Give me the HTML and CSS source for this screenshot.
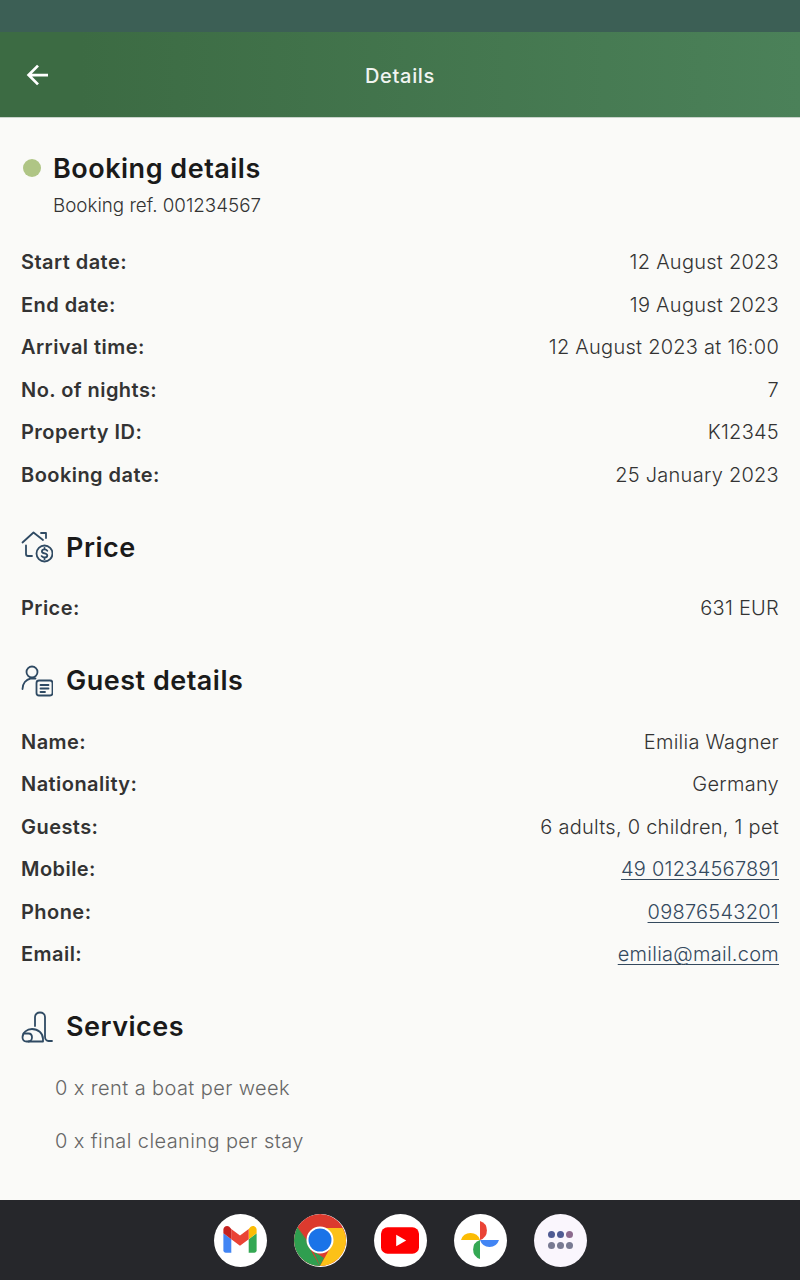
FILE: index.html
```html
<!DOCTYPE html>
<html lang="en">
<head>
    <meta charset="UTF-8">
    <meta name="viewport" content="width=device-width, initial-scale=1.0">
    <title>Details</title>
    <link rel="stylesheet" href="styles.css">
</head>
<body>
    <div class="status-bar"></div>
    <header class="toolbar">
        <svg class="back-icon" viewBox="0 0 24 24" width="30" height="30"><path d="M20 12H5M12 4.5L4.5 12l7.5 7.5" fill="none" stroke="#fff" stroke-width="2.2"/></svg>
        <div class="toolbar-title">Details</div>
    </header>

    <main class="content">
        <section class="booking">
            <div class="section-head booking-head">
                <span class="status-dot"></span>
                <h2>Booking details</h2>
            </div>
            <div class="booking-ref">Booking ref. 001234567</div>
            <div class="rows">
                <div class="row"><span class="label">Start date:</span><span class="value">12 August 2023</span></div>
                <div class="row"><span class="label">End date:</span><span class="value">19 August 2023</span></div>
                <div class="row"><span class="label">Arrival time:</span><span class="value">12 August 2023 at 16:00</span></div>
                <div class="row"><span class="label">No. of nights:</span><span class="value">7</span></div>
                <div class="row"><span class="label">Property ID:</span><span class="value">K12345</span></div>
                <div class="row"><span class="label">Booking date:</span><span class="value">25 January 2023</span></div>
            </div>
        </section>

        <section class="price">
            <div class="section-head">
                <svg class="section-icon" viewBox="0 0 32 32" width="32" height="32" fill="none" stroke="#2f4a63" stroke-width="1.8" stroke-linecap="round" stroke-linejoin="round">
                    <path d="M1.500 11.500L12.500 1.500l9.500 7.500M20 2h5v5M5 14.500V23c0 1.200.6 2 2 2h4"/>
                    <circle cx="23.500" cy="22.500" r="8"/>
                    <path d="M26.300 19.800c-.6-.9-1.600-1.400-2.800-1.400-1.500 0-2.600.8-2.600 2 0 2.700 5.400 1.400 5.400 4.100 0 1.200-1.200 2-2.800 2-1.200 0-2.300-.5-2.900-1.400M23.500 16.800v1.600M23.500 26.500v1.700"/>
                </svg>
                <h2>Price</h2>
            </div>
            <div class="rows">
                <div class="row"><span class="label">Price:</span><span class="value">631 EUR</span></div>
            </div>
        </section>

        <section class="guest">
            <div class="section-head">
                <svg class="section-icon" viewBox="0 0 32 32" width="32" height="32" fill="none" stroke="#2f4a63" stroke-width="1.8" stroke-linecap="round" stroke-linejoin="round">
                    <circle cx="11" cy="7" r="5.500"/>
                    <path d="M1.500 24c0-5.500 3.500-9.500 8-10.500h5"/>
                    <rect x="15.500" y="15.500" width="16" height="15" rx="2.500"/>
                    <path d="M19.500 20h8M19.500 23.500h8M19.500 27h4.500"/>
                </svg>
                <h2>Guest details</h2>
            </div>
            <div class="rows">
                <div class="row"><span class="label">Name:</span><span class="value">Emilia Wagner</span></div>
                <div class="row"><span class="label">Nationality:</span><span class="value">Germany</span></div>
                <div class="row"><span class="label">Guests:</span><span class="value">6 adults, 0 children, 1 pet</span></div>
                <div class="row"><span class="label">Mobile:</span><a class="value link" href="#">49 01234567891</a></div>
                <div class="row"><span class="label">Phone:</span><a class="value link" href="#">09876543201</a></div>
                <div class="row"><span class="label">Email:</span><a class="value link" href="#">emilia@mail.com</a></div>
            </div>
        </section>

        <section class="services">
            <div class="section-head">
                <svg class="section-icon" viewBox="0 0 32 32" width="32" height="32" fill="none" stroke="#2f4a63" stroke-width="1.8" stroke-linecap="round" stroke-linejoin="round">
                    <path d="M14 15V6c0-2.800 2.200-4.500 5-4.500s5 1.700 5 4.500v19.500c0 2.500 1.500 4.500 3.500 4.500H31"/>
                    <path d="M5.500 30.500c-2.500 0-4-1.700-4-4.300 0-4.700 4.500-8.200 9.500-8.200 6 0 11 4 11 10v2.500z"/>
                    <path d="M2.500 22.500h5c2 0 3.500 1.500 3.500 3.800 0 2.300-1.500 4.200-3.500 4.200"/>
                </svg>
                <h2>Services</h2>
            </div>
            <ul class="service-list">
                <li>0 x rent a boat per week</li>
                <li>0 x final cleaning per stay</li>
            </ul>
        </section>
    </main>

    <nav class="dock">
        <div class="app">
            <svg viewBox="0 0 48 48" width="38" height="38">
                <path fill="#4285f4" d="M6 40h7V23l-10-7.500V37c0 1.700 1.300 3 3 3z"/>
                <path fill="#34a853" d="M35 40h7c1.700 0 3-1.300 3-3V15.500L35 23z"/>
                <path fill="#fbbc04" d="M35 10v13l10-7.500V11c0-3.900-4.400-6.100-7.500-3.800z"/>
                <path fill="#ea4335" d="M13 23V10l11 8.300L35 10v13l-11 8.300z"/>
                <path fill="#c5221f" d="M3 11v4.500L13 23V10l-2.500-2.800C7.400 4.900 3 7.100 3 11z"/>
            </svg>
        </div>
        <div class="app chrome">
            <svg viewBox="0 0 52 52" width="52" height="52">
                <circle cx="26" cy="26" r="26" fill="#dc3a2e"/>
                <path fill="#2f9e4f" d="M26 52C11.600 52 0 40.400 0 26c0-4.700 1.200-9.100 3.400-13L16 35l10 17z"/>
                <path fill="#2f9e4f" d="M3.400 13L16.500 31.500 26 52l4-8-14-9z"/>
                <path fill="#fcc118" d="M26 14h22.500C50.700 17.800 52 21.800 52 26c0 14.400-11.600 26-26 26l11-19.500z"/>
                <circle cx="26" cy="26" r="13.500" fill="#fff"/>
                <circle cx="26" cy="26" r="11.500" fill="#1a73e8"/>
            </svg>
        </div>
        <div class="app">
            <svg viewBox="0 0 40 28" width="38" height="27">
                <rect width="40" height="28" rx="7" fill="#f00"/>
                <path d="M16 8l10.500 6L16 20z" fill="#fff"/>
            </svg>
        </div>
        <div class="app">
            <svg viewBox="0 0 40 40" width="40" height="40">
                <path fill="#ea4335" d="M20 1a10 10 0 0 1 0 19z"/>
                <path fill="#4285f4" d="M39 20a10 10 0 0 1-19 0z"/>
                <path fill="#34a853" d="M20 39a10 10 0 0 1 0-19z"/>
                <path fill="#fbbc04" d="M1 20a10 10 0 0 1 19 0z"/>
            </svg>
        </div>
        <div class="app launcher">
            <div class="dots">
                <span class="dot d1"></span><span class="dot d1"></span><span class="dot d2"></span>
                <span class="dot d3"></span><span class="dot d3"></span><span class="dot d3"></span>
            </div>
        </div>
    </nav>
</body>
</html>
```

FILE: styles.css
```css
* {
    box-sizing: border-box;
}

html,
body {
    margin: 0;
    height: 100%;
}

body {
    display: flex;
    flex-direction: column;
    height: 1280px;
    overflow: hidden;
    background-color: #fafaf8;
    font-family: "Inter", "Noto Sans", sans-serif;
}

.status-bar {
    height: 32px;
    background-color: #3c5f55;
}

.toolbar {
    position: relative;
    display: flex;
    align-items: center;
    justify-content: center;
    height: 86px;
    padding-top: 3px;
    background-image: linear-gradient(90deg, #3c6b43 10%, #4b8159 100%);
    border-bottom: 1px solid #c9d3cb;
}

.back-icon {
    position: absolute;
    left: 23px;
    top: 28px;
}

.toolbar-title {
    color: #f1f4f1;
    font-size: 20px;
    font-weight: 500;
    letter-spacing: 0.7px;
}

.content {
    flex: 1;
    padding: 0 21px;
}

.section-head {
    display: flex;
    align-items: center;
    gap: 13px;
    height: 42px;
}

.section-head h2 {
    margin: 0;
    color: #1a1a1a;
    font-size: 27px;
    font-weight: 600;
    letter-spacing: 0.5px;
}

.section-icon {
    flex: none;
}

.booking {
    padding-top: 29px;
}

.booking-head {
    gap: 12px;
}

.status-dot {
    width: 18px;
    height: 18px;
    margin-left: 2px;
    border-radius: 50%;
    background-color: #afc585;
}

.booking-ref {
    margin: 5px 0 24px;
    padding-left: 32px;
    color: #333;
    font-size: 18.800px;
    font-weight: 300;
}

.rows {
    margin-top: 19px;
}

.row {
    display: flex;
    align-items: center;
    justify-content: space-between;
    height: 42.500px;
    font-size: 20px;
}

.label {
    color: #333;
    font-weight: 600;
    letter-spacing: 0.45px;
}

.value {
    color: #333;
    font-weight: 300;
    letter-spacing: 0.26px;
}

.link {
    color: #34495e;
    text-decoration: underline;
    text-underline-offset: 3px;
    text-decoration-thickness: 1px;
}

.price {
    margin-top: 30px;
}

.guest {
    margin-top: 30px;
}

.services {
    margin-top: 30px;
}

.service-list {
    margin: 14px 0 0;
    padding: 0 0 0 34px;
    list-style: none;
    color: #666;
    font-size: 20px;
    font-weight: 300;
    letter-spacing: 0.4px;
}

.service-list li {
    display: flex;
    align-items: center;
    height: 53px;
}

.dock {
    display: flex;
    align-items: center;
    justify-content: center;
    gap: 27px;
    height: 80px;
    background-color: #26272b;
}

.app {
    display: flex;
    align-items: center;
    justify-content: center;
    width: 53px;
    height: 53px;
    border-radius: 50%;
    background-color: #fff;
}

.chrome {
    overflow: hidden;
}

.launcher {
    background-color: #faf6fd;
}

.dots {
    display: grid;
    grid-template-columns: repeat(3, 7px);
    column-gap: 2px;
    row-gap: 4px;
}

.dot {
    width: 7px;
    height: 7px;
    border-radius: 50%;
}

.d1 {
    background-color: #4f5b93;
}

.d2 {
    background-color: #8c6a8e;
}

.d3 {
    background-color: #787a92;
}
```
